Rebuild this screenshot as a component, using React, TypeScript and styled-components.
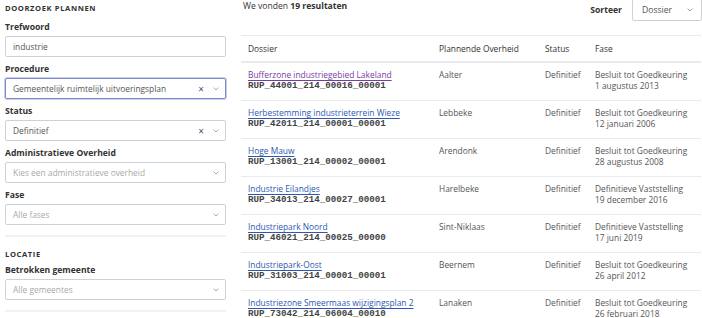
import React from 'react';
import styled, { createGlobalStyle } from 'styled-components';

const TEXT = '#333332';
const MUTED = '#a9a9a9';
const BORDER = '#cbd2da';
const LINE = '#e8ebee';
const LINK = '#2d58b0';
const VISITED = '#7a3aa6';
const FOCUS = '#7d88c4';

const GlobalStyle = createGlobalStyle`
  html, body {
    margin: 0;
    padding: 0;
    background: #fff;
    font-family: "Open Sans", "Noto Sans", sans-serif;
    color: ${TEXT};
  }
  * { box-sizing: border-box; }
`;

// =============================================================================
// Layout
// =============================================================================

const Page = styled.div`
  display: flex;
  align-items: flex-start;
  width: 702px;
  height: 318px;
  overflow: hidden;
  padding-left: 5px;
`;

const Filters = styled.aside`
  width: 221px;
  flex-shrink: 0;
  display: flex;
  flex-direction: column;
  > * { flex-shrink: 0; }
`;

const SectionTitle = styled.h3<{ $top: number }>`
  margin: ${(p) => p.$top}px 0 0 0;
  font-size: 7.6px;
  font-weight: 700;
  letter-spacing: 0.6px;
  text-transform: uppercase;
  line-height: 11px;
`;

const Field = styled.div<{ $top?: number }>`
  display: flex;
  flex-direction: column;
  margin-top: ${(p) => p.$top ?? 7}px;
`;

const Label = styled.label`
  font-size: 8.6px;
  font-weight: 700;
  line-height: 11px;
  margin-bottom: 3px;
`;

const Box = styled.div<{ $focus?: boolean }>`
  height: 21px;
  display: flex;
  align-items: center;
  padding: 0 6px 0 7px;
  border: 1px solid ${(p) => (p.$focus ? FOCUS : BORDER)};
  border-radius: 2px;
  box-shadow: ${(p) => (p.$focus ? `0 0 0 1px ${FOCUS}66` : 'none')};
  font-size: 8.4px;
  color: ${TEXT};
`;

const Value = styled.span<{ $placeholder?: boolean }>`
  flex: 1;
  white-space: nowrap;
  color: ${(p) => (p.$placeholder ? MUTED : '#555')};
`;

const Clear = styled.span`
  font-size: 10px;
  color: #3e4f82;
  margin-right: 9px;
  line-height: 1;
`;

const Chevron = styled.svg`
  width: 6px;
  height: 4px;
  flex-shrink: 0;
`;

const Divider = styled.hr<{ $top: number }>`
  margin: ${(p) => p.$top}px 0 0 0;
  border: none;
  border-top: 2px solid #f1f2f3;
  width: 100%;
`;

const Results = styled.main`
  flex: 1;
  margin-left: 15px;
  display: flex;
  flex-direction: column;
  > * { flex-shrink: 0; }
`;

const TopBar = styled.div`
  display: flex;
  align-items: flex-start;
  height: 35px;
`;

const Count = styled.p`
  margin: 0 0 0 2px;
  flex: 1;
  font-size: 8.6px;
  line-height: 12px;
  b { font-weight: 700; }
`;

const Sort = styled.div`
  display: flex;
  align-items: center;
  gap: 10px;
  font-size: 8.6px;
  font-weight: 700;
  margin-top: -1px;
`;

const SortBox = styled.div`
  width: 70px;
  height: 22px;
  display: flex;
  align-items: center;
  padding: 0 8px 0 9px;
  border: 1px solid ${BORDER};
  border-radius: 2px;
  font-weight: 400;
  color: #666;
`;

const Table = styled.div`
  border-top: 1px solid ${LINE};
  width: 460px;
`;

const Row = styled.div<{ $head?: boolean }>`
  display: grid;
  grid-template-columns: 191px 106px 50px 1fr;
  align-items: start;
  height: ${(p) => (p.$head ? 27 : 38)}px;
  padding: ${(p) => (p.$head ? 7 : 6)}px 0 0 7px;
  border-bottom: ${(p) => (p.$head ? `2px solid ${LINE}` : `1px solid ${LINE}`)};
  font-size: 8.4px;
  line-height: 11px;
  color: ${(p) => (p.$head ? TEXT : '#555')};
`;

const Cell = styled.div`
  white-space: nowrap;
`;

const DossierLink = styled.a<{ $visited?: boolean }>`
  color: ${(p) => (p.$visited ? VISITED : LINK)};
  text-decoration: underline;
  text-decoration-thickness: 0.5px;
  text-underline-offset: 1.5px;
  display: block;
`;

const Code = styled.code`
  display: block;
  font-family: "Liberation Mono", "DejaVu Sans Mono", monospace;
  font-weight: 700;
  font-size: 9.2px;
  line-height: 11px;
  color: #444;
`;

// =============================================================================
// Data
// =============================================================================

const rows = [
  { name: 'Bufferzone industriegebied Lakeland', code: 'RUP_44001_214_00016_00001', gov: 'Aalter', fase: 'Besluit tot Goedkeuring', date: '1 augustus 2013', visited: true },
  { name: 'Herbestemming industrieterrein Wieze', code: 'RUP_42011_214_00001_00001', gov: 'Lebbeke', fase: 'Besluit tot Goedkeuring', date: '12 januari 2006' },
  { name: 'Hoge Mauw', code: 'RUP_13001_214_00002_00001', gov: 'Arendonk', fase: 'Besluit tot Goedkeuring', date: '28 augustus 2008' },
  { name: 'Industrie Eilandjes', code: 'RUP_34013_214_00027_00001', gov: 'Harelbeke', fase: 'Definitieve Vaststelling', date: '19 december 2016' },
  { name: 'Industriepark Noord', code: 'RUP_46021_214_00025_00000', gov: 'Sint-Niklaas', fase: 'Definitieve Vaststelling', date: '17 juni 2019' },
  { name: 'Industriepark-Oost', code: 'RUP_31003_214_00001_00001', gov: 'Beernem', fase: 'Besluit tot Goedkeuring', date: '26 april 2012' },
  { name: 'Industriezone Smeermaas wijzigingsplan 2', code: 'RUP_73042_214_06004_00010', gov: 'Lanaken', fase: 'Besluit tot Goedkeuring', date: '26 februari 2018' },
];

const Down = () => (
  <Chevron viewBox="0 0 6 4">
    <path d="M0.6 0.6 L3 3 L5.4 0.6" fill="none" stroke="#9aa0a8" strokeWidth="0.9" />
  </Chevron>
);

const Select = ({ value, placeholder, clear, focus }: { value?: string; placeholder?: string; clear?: boolean; focus?: boolean }) => (
  <Box $focus={focus}>
    <Value $placeholder={!value}>{value || placeholder}</Value>
    {clear && <Clear>×</Clear>}
    <Down />
  </Box>
);

export default function App() {
  return (
    <Page>
      <GlobalStyle />
      <Filters>
        <SectionTitle $top={3}>Doorzoek plannen</SectionTitle>
        <Field $top={8}>
          <Label>Trefwoord</Label>
          <Box>
            <Value>industrie</Value>
          </Box>
        </Field>
        <Field>
          <Label>Procedure</Label>
          <Select value="Gemeentelijk ruimtelijk uitvoeringsplan" clear focus />
        </Field>
        <Field>
          <Label>Status</Label>
          <Select value="Definitief" clear />
        </Field>
        <Field>
          <Label>Administratieve Overheid</Label>
          <Select placeholder="Kies een administratieve overheid" />
        </Field>
        <Field>
          <Label>Fase</Label>
          <Select placeholder="Alle fases" />
        </Field>
        <Divider $top={10} />
        <SectionTitle $top={12}>Locatie</SectionTitle>
        <Field $top={5}>
          <Label>Betrokken gemeente</Label>
          <Select placeholder="Alle gemeentes" />
        </Field>
        <Divider $top={10} />
      </Filters>
      <Results>
        <TopBar>
          <Count>
            We vonden <b>19 resultaten</b>
          </Count>
          <Sort>
            Sorteer
            <SortBox>
              <Value>Dossier</Value>
              <Down />
            </SortBox>
          </Sort>
        </TopBar>
        <Table>
          <Row $head>
            <Cell>Dossier</Cell>
            <Cell>Plannende Overheid</Cell>
            <Cell>Status</Cell>
            <Cell>Fase</Cell>
          </Row>
          {rows.map((r) => (
            <Row key={r.code}>
              <Cell>
                <DossierLink href="#" $visited={r.visited}>{r.name}</DossierLink>
                <Code>{r.code}</Code>
              </Cell>
              <Cell>{r.gov}</Cell>
              <Cell>Definitief</Cell>
              <Cell>
                {r.fase}
                <br />
                {r.date}
              </Cell>
            </Row>
          ))}
        </Table>
      </Results>
    </Page>
  );
}
